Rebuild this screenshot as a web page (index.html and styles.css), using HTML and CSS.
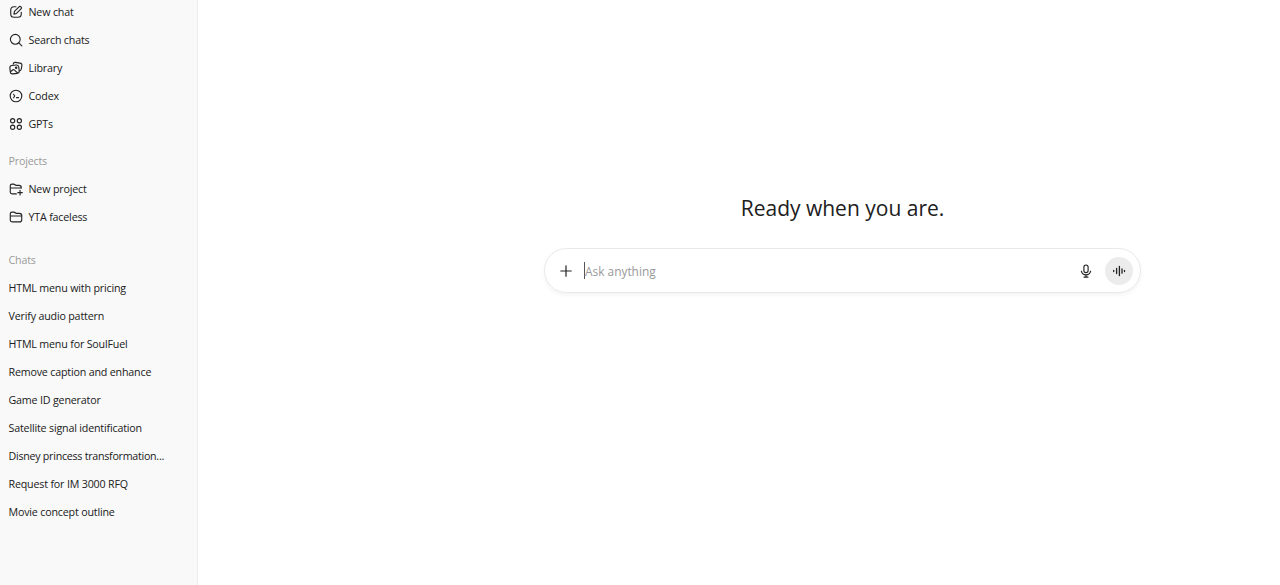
FILE: index.html
```html
<!DOCTYPE html>
<html lang="en">
<head>
<meta charset="utf-8">
<title>Chat</title>
<link rel="stylesheet" href="styles.css">
</head>
<body>
<div class="app">
  <aside class="sidebar">
    <nav class="group">
      <a class="row"><svg class="icon" viewBox="0 0 20 20"><path d="M10 2.500H7.200C4 2.500 2.500 4 2.500 7.200v5.600c0 3.200 1.500 4.700 4.700 4.700h5.600c3.200 0 4.700-1.500 4.700-4.700V10.500"/><path d="M7 13l.8-3.800 6.500-6.500a1.950 1.950 0 0 1 2.900 2.900l-6.500 6.500z"/></svg><span>New chat</span></a>
      <a class="row"><svg class="icon" viewBox="0 0 20 20"><circle cx="9" cy="9" r="7"/><path d="M14 14l4.300 4.300"/></svg><span>Search chats</span></a>
      <a class="row"><svg class="icon" viewBox="0 0 20 20"><path d="M6 4.500c.4-1.900 1.500-2.800 3.200-2.500l6.400 1c2.100.3 3.100 1.500 2.800 3.500l-.9 5.200c-.3 1.500-1 2.400-2.600 2.600"/><rect x="1.500" y="6" width="12.800" height="12" rx="3.200" transform="rotate(-6 8 12)"/><path d="M2.500 15l2.700-2.200c1-.8 1.800-.6 2.700.2l4.200 4"/><circle cx="10.200" cy="9.800" r="1"/></svg><span>Library</span></a>
      <a class="row"><svg class="icon" viewBox="0 0 20 20"><circle cx="10" cy="10" r="8.300"/><path d="M6.500 7.500L8.200 10l-1.700 2.500M10.700 12.300h3"/></svg><span>Codex</span></a>
      <a class="row"><svg class="icon" viewBox="0 0 20 20"><circle cx="5.200" cy="5.400" r="3"/><circle cx="14.800" cy="5.400" r="3"/><circle cx="5.200" cy="14.600" r="3"/><circle cx="14.800" cy="14.600" r="3"/></svg><span>GPTs</span></a>
    </nav>
    <section class="group projects">
      <h2 class="label">Projects</h2>
      <a class="row"><svg class="icon" viewBox="0 0 20 20"><path d="M10.500 17H5c-2 0-3.200-1.200-3.200-3.200V5.500C1.800 3.900 2.700 3 4.300 3h2.200c1.900 0 2 1.800 3.700 1.800h4.300c1.900 0 3 1.100 3 3V9M1.800 8.600h15.700M15.800 12v6.400M12.600 15.200H19"/></svg><span>New project</span></a>
      <a class="row"><svg class="icon" viewBox="0 0 20 20"><path d="M1.800 5.500C1.800 3.900 2.700 3 4.300 3h2.600c1.900 0 2 1.800 3.700 1.800H15c2 0 3.200 1.200 3.200 3.200v5.800c0 2-1.200 3.200-3.200 3.200H5c-2 0-3.200-1.200-3.200-3.200zM1.800 8.600h16.400"/></svg><span>YTA faceless</span></a>
    </section>
    <section class="group chats">
      <h2 class="label">Chats</h2>
      <a class="row"><span>HTML menu with pricing</span></a>
      <a class="row"><span>Verify audio pattern</span></a>
      <a class="row"><span>HTML menu for SoulFuel</span></a>
      <a class="row"><span>Remove caption and enhance</span></a>
      <a class="row"><span>Game ID generator</span></a>
      <a class="row"><span>Satellite signal identification</span></a>
      <a class="row tight"><span>Disney princess transformation...</span></a>
      <a class="row"><span>Request for IM 3000 RFQ</span></a>
      <a class="row"><span>Movie concept outline</span></a>
    </section>
  </aside>
  <main class="main">
    <h1 class="title">Ready when you are.</h1>
    <div class="composer">
      <svg class="plus" viewBox="0 0 14 14"><path d="M7 1.800v10.400M1.800 7h10.400"/></svg>
      <span class="caret"></span>
      <span class="placeholder">Ask anything</span>
      <svg class="mic" viewBox="0 0 14 14"><rect x="4.900" y="1" width="4.200" height="7.600" rx="2.100"/><path d="M2.400 7.200c.5 2.400 2.200 3.700 4.600 3.700s4.100-1.300 4.600-3.700M7 11v2.100M5 13.100h4"/></svg>
      <span class="voice"><svg class="wave" viewBox="0 0 14 14"><path d="M1.700 6.500v1M4.600 4.500v5M7.400 2.500v9M10 4.800v4.400M12.500 6.500v1"/></svg></span>
    </div>
  </main>
</div>
</body>
</html>
```
FILE: styles.css
```css
* { box-sizing: border-box; }
body {
  margin: 0;
  background: #fff;
  color: #202020;
  font-family: "Open Sans", "Noto Sans", sans-serif;
}
.app { display: flex; height: 585px; overflow: hidden; }
.sidebar {
  flex: none;
  width: 198px;
  background: #f9f9f9;
  border-right: 1px solid #ededed;
}
.group { display: flex; flex-direction: column; padding-left: 8.5px; }
.group:first-child { margin-top: -2px; }
.projects { margin-top: 9px; }
.chats { margin-top: 15px; }
.row, .label {
  display: flex;
  align-items: center;
  gap: 5.500px;
  height: 28px;
  margin: 0;
  font-size: 10.7px;
  font-weight: 400;
  line-height: 16px;
  letter-spacing: -0.18px;
  white-space: nowrap;
}
.tight { letter-spacing: -0.27px; }
.label { color: #9a9a9a; }
.icon { width: 14px; height: 14px; margin-left: 0.5px; }
.icon, .plus, .mic, .wave {
  flex: none;
  fill: none;
  stroke: #222;
  stroke-width: 1.6;
  stroke-linecap: round;
  stroke-linejoin: round;
}
.main { flex: 1; display: flex; flex-direction: column; align-items: center; padding: 192px 0 0 207px; }
.title {
  margin: 0;
  font-size: 21px;
  font-weight: 400;
  line-height: 32px;
}
.composer {
  display: flex;
  align-items: center;
  width: 597px;
  height: 45px;
  margin-top: 24px;
  padding: 0 7.5px 0 14px;
  border: 1px solid #e9e9e9;
  border-radius: 23px;
  box-shadow: 0 2px 4px rgba(0, 0, 0, 0.05);
}
.plus { width: 14px; height: 14px; stroke-width: 1.2; }
.caret { width: 1px; height: 17px; margin: 0 0 1px 11px; background: #555; }
.placeholder { flex: 1; font-size: 11.9px; line-height: 18px; color: #999; }
.mic { width: 14px; height: 14px; stroke-width: 1.15; margin-right: 11.500px; }
.voice {
  display: flex;
  align-items: center;
  justify-content: center;
  width: 28px;
  height: 28px;
  border-radius: 50%;
  background: #ececec;
}
.wave { width: 14px; height: 14px; stroke-width: 1.3; }
```
